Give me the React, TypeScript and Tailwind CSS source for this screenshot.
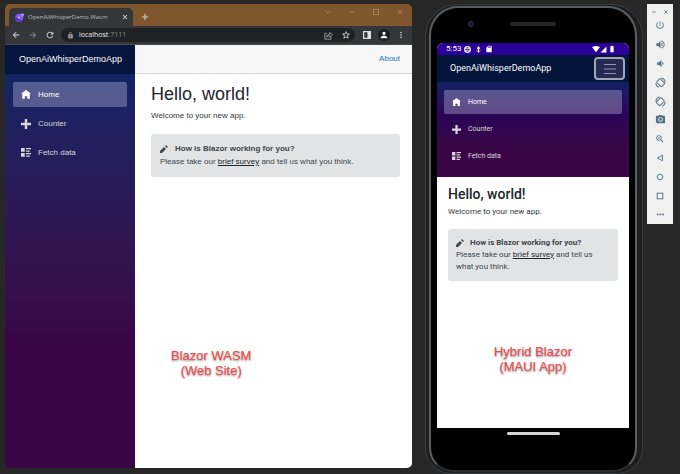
import type { ReactNode } from "react";
import {
  MdArrowBack,
  MdArrowForward,
  MdBatteryFull,
  MdCameraAlt,
  MdLock,
  MdMoreHoriz,
  MdMoreVert,
  MdPerson,
  MdPowerSettingsNew,
  MdRefresh,
  MdSdCard,
  MdSignalCellular4Bar,
  MdSignalWifi4Bar,
  MdStarBorder,
  MdVolumeDown,
  MdVolumeUp,
  MdZoomIn,
} from "react-icons/md";

const HOME = "M4 0l-4 3h1v4h2v-2h2v2h2v-4.03l1 .03-4-3z";
const PLUS = "M3 0v3h-3v2h3v3h2v-3h3v-2h-3v-3h-2z";
const LIST =
  "M0 0v3h3v-3h-3zm4 0v1h4v-1h-4zm0 2v1h3v-1h-3zm-4 2v3h3v-3h-3zm4 0v1h4v-1h-4zm0 2v1h3v-1h-3z";
const PENCIL = "M6 0l-1 1 2 2 1-1-2-2zm-2 2l-4 4v2h2l4-4-2-2z";

const navItems = [
  { label: "Home", icon: HOME },
  { label: "Counter", icon: PLUS },
  { label: "Fetch data", icon: LIST },
];

function Glyph({ d, className }: { d: string; className: string }) {
  return (
    <svg viewBox="0 0 8 8" className={className} fill="currentColor" aria-hidden="true">
      <path d={d} />
    </svg>
  );
}

function BrandLogo() {
  return (
    <svg viewBox="0 0 16 16" className="size-[9px] shrink-0" aria-hidden="true">
      <circle cx="7.5" cy="8.5" r="7" fill="#7d5af0" />
      <path d="M1 9a7 7 0 0 0 13 3c-3 2-6 0-7-2S3 7 1 9z" fill="#5b30d6" />
      <path d="M10 1c3 1 5-1 6 0s-1 5-3 8c-1-4-3-5-3-8z" fill="#a98bff" />
      <circle cx="7" cy="8" r="2" fill="#cbbaff" />
    </svg>
  );
}

function RotateIcon({ flipped = false }: { flipped?: boolean }) {
  return (
    <svg
      viewBox="0 0 24 24"
      className={flipped ? "size-[11px] -scale-x-100" : "size-[11px]"}
      fill="none"
      stroke="currentColor"
      strokeWidth="2.2"
      aria-hidden="true"
    >
      <rect x="6.5" y="5" width="11" height="15" rx="1.5" transform="rotate(-45 12 12)" />
      <path d="M14 2C19 3 22 7 22 12" />
      <path d="M2 13c0 4 3 8 7 9" />
    </svg>
  );
}

function Outline({ children }: { children: ReactNode }) {
  return (
    <svg viewBox="0 0 10 10" className="size-2" fill="none" stroke="currentColor" aria-hidden="true">
      {children}
    </svg>
  );
}

function BrowserChrome() {
  return (
    <>
      <div className="flex h-[22px] items-end bg-[#80562d] pl-1">
        <div className="flex h-[18px] w-[124px] items-center gap-1 rounded-t-[5px] bg-[#35363a] pr-1 pl-1.5 text-[#b9babd]">
          <BrandLogo />
          <span className="flex-1 whitespace-nowrap font-['Open_Sans',sans-serif] text-[6px]">
            OpenAiWhisperDemo.Wasm
          </span>
          <button aria-label="Close tab" className="text-[#d0d0d0]">
            <Outline>
              <path d="M2.5 2.5l5 5m0-5l-5 5" strokeWidth="1.3" />
            </Outline>
          </button>
        </div>
        <button aria-label="New tab" className="ml-2 flex h-[18px] items-center text-[#dccbb9]">
          <Outline>
            <path d="M5 1v8M1 5h8" strokeWidth="1.4" />
          </Outline>
        </button>
        <div className="mr-2 mb-[10px] ml-auto flex gap-4 text-[#b08c68]">
          <button aria-label="Search tabs">
            <Outline>
              <path d="M1.5 3.5L5 7l3.5-3.5" />
            </Outline>
          </button>
          <button aria-label="Minimize">
            <Outline>
              <path d="M1.5 5h7" />
            </Outline>
          </button>
          <button aria-label="Maximize">
            <Outline>
              <rect x="2" y="2" width="6" height="6" />
            </Outline>
          </button>
          <button aria-label="Close">
            <Outline>
              <path d="M2 2l6 6m0-6L2 8" />
            </Outline>
          </button>
        </div>
      </div>
      <div className="flex h-[19px] items-center border-b border-[#4a4b4e] bg-[#35363a] pr-1.5 pl-1.5 text-[#dfe0e2]">
        <button aria-label="Back">
          <MdArrowBack className="size-[10px]" />
        </button>
        <button aria-label="Forward" className="ml-[7px] text-[#85878a]">
          <MdArrowForward className="size-[10px]" />
        </button>
        <button aria-label="Reload" className="ml-[7px]">
          <MdRefresh className="size-[10px]" />
        </button>
        <div className="ml-1.5 flex h-[14px] flex-1 items-center rounded-full bg-[#202124] pr-1 pl-1.5">
          <MdLock className="size-[7px] text-[#97999c]" />
          <span className="ml-[5px] flex-1 font-['Open_Sans',sans-serif] text-[7px] text-[#8c8e91]">
            <span className="text-[#eeeeee]">localhost</span>:7111
          </span>
          <button aria-label="Share" className="text-[#b0b2b5]">
            <svg viewBox="0 0 16 16" className="size-[9px]" fill="none" stroke="currentColor" strokeWidth="1.4">
              <path d="M5 4H1.5v10.5h11V11" />
              <path d="M4.5 11c.5-4 3-5.500 6-5.500V2.500L15 7l-4.500 4V8.500c-3 0-4.500.5-6 2.500z" />
            </svg>
          </button>
          <button aria-label="Bookmark" className="ml-2">
            <MdStarBorder className="size-[10px]" />
          </button>
        </div>
        <button aria-label="Side panel" className="ml-2">
          <svg viewBox="0 0 16 16" className="size-2">
            <path d="M0 0h16v16H0zM2.5 2.5v11H9v-11z" fill="currentColor" fillRule="evenodd" />
          </svg>
        </button>
        <button
          aria-label="Profile"
          className="ml-[7px] flex size-3 items-center justify-center rounded-full bg-[#1c1d20] text-white"
        >
          <MdPerson className="size-[10px]" />
        </button>
        <button aria-label="Menu" className="ml-1.5">
          <MdMoreVert className="size-[10px]" />
        </button>
      </div>
    </>
  );
}

function BrowserWindow() {
  return (
    <section className="mb-1.5 flex min-w-0 flex-1 flex-col overflow-hidden rounded-[5px] font-['Liberation_Sans',Arial,sans-serif]">
      <BrowserChrome />
      <div className="flex flex-1">
        <aside className="w-[130px] shrink-0 bg-linear-to-b from-[#052767] to-[#3a0647] to-70%">
          <div className="flex h-[29px] items-center bg-[#06153d] pl-3.5 text-[9px] text-white">
            <a href="#home">OpenAiWhisperDemoApp</a>
          </div>
          <nav className="flex flex-col gap-1 p-2">
            {navItems.map((item, i) => (
              <a
                key={item.label}
                href="#home"
                className={`flex h-[25px] items-center gap-[7px] rounded-[2px] pl-2 text-[8px] ${
                  i === 0 ? "bg-[#d8d0f0]/33 text-white" : "text-[#d7d7d7]"
                }`}
              >
                <Glyph d={item.icon} className="size-[10px]" />
                {item.label}
              </a>
            ))}
          </nav>
        </aside>
        <main className="relative flex-1 bg-white text-[8px] text-[#33373b]">
          <div className="flex h-[29px] items-center justify-end border-b border-[#d6d5d5] bg-[#f7f7f7] pr-3">
            <a href="#about" className="text-[#2272bf]">
              About
            </a>
          </div>
          <article className="pr-3 pl-4">
            <h1 className="pt-2 text-[18px] leading-6 text-[#212529]">Hello, world!</h1>
            <p className="pt-1 leading-3">Welcome to your new app.</p>
            <div className="mt-3 rounded-[3px] bg-[#e2e3e5] p-2 pb-[9px] pl-[9px] leading-[13px] text-[#41464b]">
              <div className="flex items-center gap-[7px]">
                <Glyph d={PENCIL} className="size-2" />
                <strong>How is Blazor working for you?</strong>
              </div>
              Please take our{" "}
              <a href="#survey" className="text-[#212529] underline">
                brief survey
              </a>{" "}
              and tell us what you think.
            </div>
          </article>
          <p className="absolute top-[303px] left-9 text-center text-[13px] leading-[15px] text-[#f24a4a] [text-shadow:0_1px_2px_#00000080]">
            Blazor WASM
            <br />
            (Web Site)
          </p>
        </main>
      </div>
    </section>
  );
}

function StatusBar() {
  return (
    <div className="flex h-3 items-center bg-[#2b0099] px-[9px] font-['Roboto',sans-serif] text-[8px] text-white">
      <span>5:53</span>
      <svg viewBox="0 0 16 16" className="ml-[3px] size-[7px]" fill="none" stroke="currentColor" strokeWidth="2.5">
        <circle cx="8" cy="8" r="6.5" />
        <path d="M2 6h12M2 10h12" strokeWidth="1.8" />
      </svg>
      <svg viewBox="0 0 16 16" className="ml-1 size-[7px]" fill="none" stroke="currentColor" strokeWidth="2">
        <circle cx="8" cy="5" r="2.5" />
        <path d="M8 1v14M4 10l4 4 4-4" />
      </svg>
      <MdSdCard className="ml-[3px] size-2" />
      <MdSignalWifi4Bar className="ml-auto size-2" />
      <MdSignalCellular4Bar className="size-[7px]" />
      <MdBatteryFull className="ml-px mr-1 size-2" />
    </div>
  );
}

function Phone() {
  return (
    <section className="ml-[13px] flex w-[218px] shrink-0 rounded-t-[32px] rounded-b-[26px] border border-[#3c3d3f] bg-[#1d1e20] pt-px pr-[5px] pb-px pl-[3px]">
      <div className="flex flex-1 flex-col rounded-t-[29px] rounded-b-[24px] border-2 border-[#5a5e63] border-b-[#2b2c2e] bg-black px-1.5 font-['Roboto',sans-serif]">
        <div className="flex h-[35px] items-center pb-1">
          <div className="ml-[31px] size-[6px] rounded-full border border-[#303238] bg-[#161a36]" />
          <div className="ml-9 h-1 w-[46px] rounded-full bg-[#252627]" />
        </div>
        <div className="relative flex flex-1 flex-col overflow-hidden rounded-t-md bg-white">
          <StatusBar />
          <div className="flex h-[27px] items-center justify-between bg-[#05143b] pr-1 pl-[13px]">
            <a href="#home" className="text-[9px] text-white">
              OpenAiWhisperDemoApp
            </a>
            <button
              aria-label="Toggle navigation"
              className="flex h-[23px] w-[31px] items-center justify-center rounded-[4px] border-2 border-[#a2a6b2] bg-[#252a52] text-[#9094a8]"
            >
              <svg viewBox="0 0 12 10" className="h-[10px] w-3" stroke="currentColor">
                <path d="M0 .5h12M0 5h12M0 9.5h12" />
              </svg>
            </button>
          </div>
          <nav className="flex flex-col gap-[3px] bg-linear-to-b from-[#122064] via-[#2b0456] via-35% to-[#3a0647] to-70% px-[7px] pt-2 pb-[9px]">
            {navItems.map((item, i) => (
              <a
                key={item.label}
                href="#home"
                className={`flex h-6 items-center gap-[7px] rounded-[2px] pl-2 text-[7px] ${
                  i === 0 ? "bg-[#d8d0f0]/33 text-white" : "text-[#d7d7d7]"
                }`}
              >
                <Glyph d={item.icon} className="size-[9px]" />
                {item.label}
              </a>
            ))}
          </nav>
          <main className="px-[11px] text-[8px] text-[#33373b]">
            <h1 className="pt-2 text-[14px] leading-[18px] font-medium text-[#212529]">Hello, world!</h1>
            <p className="pt-[3px] leading-3">Welcome to your new app.</p>
            <div className="mt-[11px] rounded-[3px] bg-[#e2e3e5] p-2 leading-3 text-[#41464b]">
              <div className="flex items-center gap-1.5">
                <Glyph d={PENCIL} className="size-2" />
                <strong className="font-bold">How is Blazor working for you?</strong>
              </div>
              Please take our{" "}
              <a href="#survey" className="text-[#212529] underline">
                brief survey
              </a>{" "}
              and tell us what you think.
            </div>
          </main>
          <p className="absolute inset-x-0 top-[301px] text-center font-['Liberation_Sans',Arial,sans-serif] text-[13px] leading-[15px] text-[#f24a4a] [text-shadow:0_1px_2px_#00000080]">
            Hybrid Blazor
            <br />
            (MAUI App)
          </p>
        </div>
        <div className="flex h-[42px] justify-center pt-1">
          <div className="h-[3px] w-[53px] rounded-full bg-[#d5d5d5]" />
        </div>
      </div>
    </section>
  );
}

const emulatorTools = [
  { name: "Power", icon: <MdPowerSettingsNew className="size-[10px]" /> },
  { name: "Volume up", icon: <MdVolumeUp className="size-[11px]" /> },
  { name: "Volume down", icon: <MdVolumeDown className="size-[11px]" /> },
  { name: "Rotate left", icon: <RotateIcon /> },
  { name: "Rotate right", icon: <RotateIcon flipped /> },
  { name: "Take screenshot", icon: <MdCameraAlt className="size-[11px]" /> },
  { name: "Zoom", icon: <MdZoomIn className="size-[10px]" /> },
  {
    name: "Back",
    icon: (
      <Outline>
        <path d="M8 1.5v7L2 5z" strokeWidth="1.2" />
      </Outline>
    ),
  },
  {
    name: "Overview home",
    icon: (
      <Outline>
        <circle cx="5" cy="5" r="3.5" strokeWidth="1.2" />
      </Outline>
    ),
  },
  {
    name: "Overview",
    icon: (
      <Outline>
        <rect x="1.5" y="1.5" width="7" height="7" strokeWidth="1.2" />
      </Outline>
    ),
  },
  { name: "More", icon: <MdMoreHoriz className="size-[11px]" /> },
];

function EmulatorToolbar() {
  return (
    <div className="ml-1 flex h-[220px] w-[26px] shrink-0 flex-col bg-[#f0f0f0] text-[#547482]">
      <div className="flex h-3 items-end justify-center gap-1">
        <button aria-label="Minimize emulator">
          <Outline>
            <path d="M3 5h4" />
          </Outline>
        </button>
        <button aria-label="Close emulator">
          <Outline>
            <path d="M3 3l4 4m0-4L3 7" />
          </Outline>
        </button>
      </div>
      {emulatorTools.map((tool) => (
        <button key={tool.name} aria-label={tool.name} className="flex flex-1 items-center justify-center">
          {tool.icon}
        </button>
      ))}
    </div>
  );
}

export default function App() {
  return (
    <div className="flex min-h-screen items-stretch bg-[#272727] pt-1 pr-[7px] pl-[5px]">
      <BrowserWindow />
      <Phone />
      <EmulatorToolbar />
    </div>
  );
}
